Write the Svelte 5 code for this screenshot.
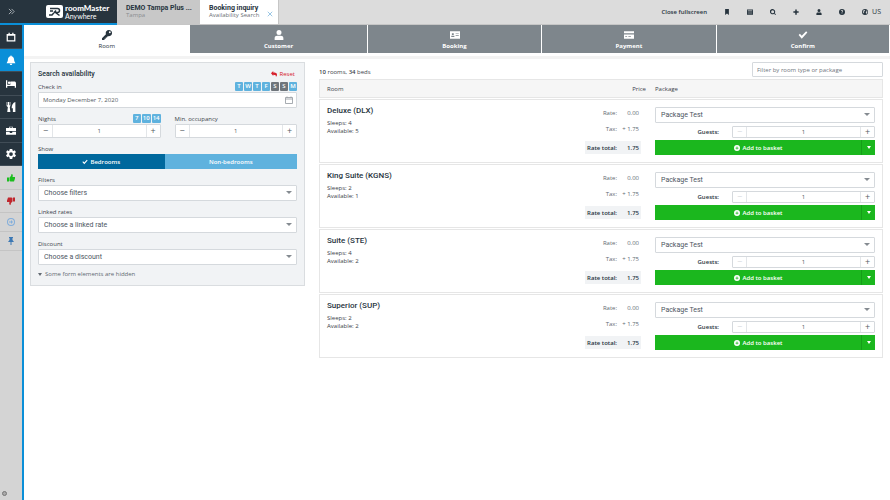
<script lang="ts">
	const paths: Record<string, string> = {
		chevrons: 'M2 2l6 6-6 6M8 2l6 6-6 6',
		calendar: 'M1 3h3V1h2v2h4V1h2v2h3v12H1zM3 6v7h10V6z',
		bell: 'M8 0l1 2c3 1 4 3 4 6 0 2 1 3 2 5H1c1-2 2-3 2-5 0-3 1-5 4-6zM6 14h4c0 3-4 3-4 0z',
		bed: 'M0 2h2v7h5V4h6c2 0 3 1 3 3v7h-2v-3H2v3H0zM3 6a2 2 0 104 0 2 2 0 10-4 0z',
		food: 'M1 0h1v5h1V0h2v5h1V0h1v6c0 1-1 2-1 2l1 8H2l1-8S1 7 1 6zM15 0v16h-4v-6H9C9 5 11 1 15 0z',
		briefcase: 'M5 3V1h6v2h5v5H0V3zM6 3h4V2H6zM0 9h6v2h4V9h6v5H0z',
		gear: 'M7 0h3l.5 2.5 1.500.7L14 2l2 3-2 1.500v2L16 10l-2 3-2-1-1.500 1L10 16H6l-.5-3L4 12l-2 1-2-3 2-1.500v-2L0 5l2-3 2 1.200 1.500-.7L6 0zM8 5a3 3 0 100 6 3 3 0 000-6z',
		thumb: 'M0 7h4v8H0zM5 7l3-3 1-4c3 0 3 3 2 6h5v3l-2 6H7l-2-1z',
		arrow: 'M8 0a8 8 0 100 16A8 8 0 008 0zm0 2a6 6 0 110 12A6 6 0 018 2zM8 4l4 4-4 4v-3H4V7h4z',
		pin: 'M4 0h8v2h-1v4l3 4H9v6H7v-6H2l3-4V2H4z',
		key: 'M11 0a5 5 0 00-4.700 6.700L0 13v3h4v-2h2v-2h2l1.300-2.300A5 5 0 1011 0zm1.500 2a1.500 1.500 0 110 3 1.500 1.500 0 010-3z',
		user: 'M8 0a4 4 0 100 8 4 4 0 000-8zM1 16v-3c0-3 2-4 4-4h6c2 0 4 1 4 4v3z',
		idcard: 'M0 2h16v12H0zM2 9v2h5V9zM3 5v3h3V5zM9 5v1h5V5zM9 8v1h5V8z',
		card: 'M0 2h16v3H0zM0 7h16v7H0zM2 10v1h3v-1zM7 10v1h4v-1z',
		check: 'M1 8l2-2 3 3 7-7 2 2-9 10z',
		bookmark: 'M3 0h10v16l-5-4-5 4z',
		list: 'M0 1h16v14H0zM2 4v1h12V4zM2 7v1h12V7zM2 10v1h12v-1z',
		search: 'M7 0a7 7 0 104 12.500l3 3.500 2-2-3.500-3A7 7 0 007 0zm0 3a4 4 0 110 8 4 4 0 010-8z',
		plus: 'M6 1h4v5h5v4h-5v5H6v-5H1V6h5z',
		help: 'M8 0a8 8 0 100 16A8 8 0 008 0zM5 5c0-3 6-3 6 0 0 2-2 2-2 4H7c0-3 2-2 2-4 0-1-2-1-2 0zm2 5h2v2H7z',
		globe: 'M8 0a8 8 0 100 16A8 8 0 008 0zM5 2l3 1-1 3-3 1 2 2-1 3-3-4zM10 3l4 3v4l-3 3-1-4 2-2z',
		reply: 'M0 6l6-6v4c6 0 10 1 10 6 0 2-1 4-3 6 1-4-1-6-7-6v3z',
		plusCircle: 'M8 0a8 8 0 100 16A8 8 0 008 0zM7 4h2v3h3v2H9v3H7V9H4V7h3z'
	};

	const nav = [
		{ icon: 'calendar', label: 'Calendar' },
		{ icon: 'bell', label: 'Booking inquiry', active: true },
		{ icon: 'bed', label: 'Rooms' },
		{ icon: 'food', label: 'Restaurant' },
		{ icon: 'briefcase', label: 'Business' },
		{ icon: 'gear', label: 'Settings' }
	];
	const shortcuts = [
		{ icon: 'thumb', label: 'Check in', kind: 'up' },
		{ icon: 'thumb', label: 'Check out', kind: 'down' },
		{ icon: 'arrow', label: 'Next', kind: 'next small' },
		{ icon: 'pin', label: 'Pin', kind: 'pin small' }
	];
	const tools = ['bookmark', 'list', 'search', 'plus', 'user', 'help'];
	const steps = [
		{ icon: 'key', label: 'Room' },
		{ icon: 'user', label: 'Customer' },
		{ icon: 'idcard', label: 'Booking' },
		{ icon: 'card', label: 'Payment' },
		{ icon: 'check', label: 'Confirm' }
	];
	const days = ['T', 'W', 'T', 'F', 'S', 'S', 'M'];
	const selects = [
		{ id: 'filters', label: 'Filters', value: 'Choose filters' },
		{ id: 'linked', label: 'Linked rates', value: 'Choose a linked rate' },
		{ id: 'discount', label: 'Discount', value: 'Choose a discount' }
	];
	const rooms = [
		{ name: 'Deluxe (DLX)', sleeps: 4, available: 5 },
		{ name: 'King Suite (KGNS)', sleeps: 2, available: 1 },
		{ name: 'Suite (STE)', sleeps: 4, available: 2 },
		{ name: 'Superior (SUP)', sleeps: 2, available: 2 }
	];
</script>

{#snippet icon(name: string)}
	<svg class="icon" viewBox="0 0 16 16" aria-hidden="true">
		<path class:line={name === 'chevrons'} d={paths[name]} fill-rule="evenodd" />
	</svg>
{/snippet}

{#snippet stepper(id: string)}
	<div class="stepper">
		<button type="button" aria-label="Decrease">−</button>
		<input {id} type="text" value="1" />
		<button type="button" aria-label="Increase">+</button>
	</div>
{/snippet}

<div class="app">
	<header>
		<div class="brand">
			<button type="button" class="expand" aria-label="Expand menu">{@render icon('chevrons')}</button>
			<svg class="logo" viewBox="0 0 34 26" aria-hidden="true">
				<rect width="34" height="26" rx="4" fill="#fff" />
				<path d="M8 7h15q4 0 4 4t-4 4h-4l8 6M6 20h6l8-9M8 12h6" fill="none" stroke="#27343e" stroke-width="3" />
			</svg>
			<div class="brand-name"><strong>roomMaster</strong><span>Anywhere</span></div>
		</div>
		<a class="tab" href="#tampa"><strong>DEMO Tampa Plus ...</strong><span>Tampa</span></a>
		<div class="tab current">
			<a href="#inquiry"><strong>Booking inquiry</strong><span>Availability Search</span></a>
			<button type="button" aria-label="Close tab">
				<svg viewBox="0 0 8 8"><path d="M1 1l6 6M7 1L1 7" stroke="#79b4dc" /></svg>
			</button>
		</div>
		<div class="tools">
			<button type="button">Close fullscreen</button>
			{#each tools as tool}
				<button type="button" aria-label={tool}>{@render icon(tool)}</button>
			{/each}
			<button type="button" class="locale">{@render icon('globe')} US</button>
		</div>
	</header>

	<div class="body">
		<nav>
			{#each nav as item}
				<a href="#{item.icon}" class:active={item.active} aria-label={item.label}>{@render icon(item.icon)}</a>
			{/each}
			{#each shortcuts as item}
				<a href="#{item.kind}" class="light {item.kind}" aria-label={item.label}>{@render icon(item.icon)}</a>
			{/each}
			<button type="button" class="status" aria-label="Status"></button>
		</nav>

		<main>
			<div class="steps">
				{#each steps as step, i}
					<button type="button" class:selected={i === 0}>{@render icon(step.icon)}<span>{step.label}</span></button>
				{/each}
			</div>

			<div class="content">
				<form>
					<div class="row title">
						<h1>Search availability</h1>
						<button type="button" class="reset">{@render icon('reply')} Reset</button>
					</div>
					<div class="row label-row">
						<label for="checkin">Check in</label>
						<div class="chips">
							{#each days as day}
								<button type="button" class:weekend={day === 'S'}>{day}</button>
							{/each}
						</div>
					</div>
					<div class="field date">
						<input id="checkin" type="text" value="Monday December 7, 2020" />
						<svg viewBox="0 0 16 16" aria-hidden="true"><path d="M1 3h14v12H1zM1 6h14M4 1v2M12 1v2" fill="none" stroke="#8b9198" stroke-width="1.500" /></svg>
					</div>
					<div class="pair">
						<div>
							<div class="row label-row">
								<label for="nights">Nights</label>
								<div class="chips">
									{#each [7, 10, 14] as n}
										<button type="button">{n}</button>
									{/each}
								</div>
							</div>
							{@render stepper('nights')}
						</div>
						<div>
							<div class="row label-row"><label for="occupancy">Min. occupancy</label></div>
							{@render stepper('occupancy')}
						</div>
					</div>
					<div class="group">
						<div class="row label-row"><span>Show</span></div>
						<div class="toggle">
							<button type="button" class="on">{@render icon('check')} Bedrooms</button>
							<button type="button">Non-bedrooms</button>
						</div>
					</div>
					{#each selects as s}
						<div class="group">
							<div class="row label-row"><label for={s.id}>{s.label}</label></div>
							<div class="select"><select id={s.id}><option>{s.value}</option></select></div>
						</div>
					{/each}
					<button type="button" class="hidden-note"><i class="caret"></i>Some form elements are hidden</button>
				</form>

				<section>
					<div class="summary">
						<span><b>10</b> rooms, <b>34</b> beds</span>
						<input type="text" aria-label="Filter" placeholder="Filter by room type or package" />
					</div>
					<div class="columns head">
						<span>Room</span><span class="price-head">Price</span><span>Package</span>
					</div>
					{#each rooms as room, i}
						<article class="columns">
							<div class="room">
								<h2>{room.name}</h2>
								<p>Sleeps: {room.sleeps}</p>
								<p>Available: {room.available}</p>
							</div>
							<dl>
								<div><dt>Rate:</dt><dd>0.00</dd></div>
								<div><dt>Tax:</dt><dd>+ 1.75</dd></div>
								<div class="total"><dt>Rate total:</dt><dd>1.75</dd></div>
							</dl>
							<div class="package">
								<div class="select"><select aria-label="Package"><option>Package Test</option></select></div>
								<div class="guests">
									<label for="guests-{i}">Guests:</label>
									{@render stepper(`guests-${i}`)}
								</div>
								<div class="basket">
									<button type="button">{@render icon('plusCircle')} Add to basket</button>
									<button type="button" class="more" aria-label="More options"><i class="caret"></i></button>
								</div>
							</div>
						</article>
					{/each}
				</section>
			</div>
		</main>
	</div>
</div>

<style>
	:global(body) {
		margin: 0;
	}

	.app {
		display: flex;
		flex-direction: column;
		min-height: 100vh;
		background: #fff;
		color: #3c434a;
		font: 6px/8px 'Open Sans', 'Noto Sans', sans-serif;
	}

	.app * {
		box-sizing: border-box;
	}

	button,
	input,
	select {
		margin: 0;
		padding: 0;
		border: 0;
		background: none;
		color: inherit;
		font: inherit;
	}

	a {
		color: inherit;
		text-decoration: none;
	}

	h1,
	h2,
	p,
	dl,
	dd {
		margin: 0;
	}

	input {
		min-width: 0;
	}

	.icon {
		width: 6px;
		height: 6px;
		flex: none;
		fill: currentColor;
	}

	.icon .line {
		fill: none;
		stroke: currentColor;
		stroke-width: 2;
	}

	header {
		display: flex;
		height: 25px;
		background: #dcdcdc;
		border-bottom: 1px solid #c6c6c6;
	}

	.brand {
		display: flex;
		align-items: center;
		width: 117px;
		height: 25px;
		background: #27343e;
		border-bottom: 2px solid #0a8fd8;
		color: #fff;
	}

	.expand {
		display: flex;
		justify-content: center;
		width: 22px;
		margin-right: 24px;
		color: #b5bbc0;
	}

	.expand .icon {
		width: 7px;
		height: 7px;
	}

	.logo {
		width: 17px;
		height: 13px;
		margin-right: 2px;
	}

	.brand-name {
		display: flex;
		flex-direction: column;
		font-family: Lato, sans-serif;
		font-size: 8px;
	}

	.brand-name strong {
		font-weight: 900;
	}

	.brand-name span {
		font-size: 7px;
	}

	.tab {
		width: 83px;
		padding: 4px 9px 0;
		background: #c8c8c8;
	}

	.tab strong,
	.tab span {
		display: block;
		white-space: nowrap;
	}

	.tab strong {
		color: #27343e;
		font-family: Roboto, sans-serif;
		font-size: 7px;
		font-weight: 700;
	}

	.tab span {
		line-height: 7px;
		color: #8a8d90;
	}

	.tab.current {
		display: flex;
		justify-content: space-between;
		width: 79px;
		padding-right: 5px;
		background: #fff;
		border-right: 1px solid #c6c6c6;
	}

	.tab.current span {
		color: #6b7075;
	}

	.tab button svg {
		display: block;
		width: 6px;
		height: 6px;
	}

	.tools {
		display: flex;
		flex: 1;
		align-items: center;
		justify-content: flex-end;
		gap: 17px;
		padding-right: 9px;
		color: #27343e;
		font-weight: 600;
	}

	.tools button {
		display: flex;
		align-items: center;
		gap: 4px;
	}

	.tools .locale {
		font-size: 7px;
		font-weight: 400;
	}

	.body {
		display: flex;
		flex: 1;
	}

	nav {
		display: flex;
		flex-direction: column;
		width: 24px;
		background: #d4d4d4;
		border-right: 2px solid #0a8fd8;
	}

	nav a {
		display: flex;
		align-items: center;
		justify-content: center;
		height: 24px;
		background: #27343e;
		border-bottom: 1px solid #414d57;
		color: #fff;
	}

	nav a:nth-child(even) {
		height: 23px;
	}

	nav a .icon,
	.steps .icon {
		width: 10px;
		height: 10px;
	}

	nav a.active {
		background: #0a8fd8;
	}

	nav a.light {
		background: #d4d4d4;
		border-color: #c4c4c4;
	}

	nav a.light .icon {
		width: 8px;
		height: 8px;
	}

	nav a.up {
		color: #1bbd1e;
	}

	nav a.down {
		color: #c0272d;
	}

	nav a.down .icon {
		transform: rotate(180deg);
	}

	nav a.light.small {
		height: 19px;
	}

	nav a.next {
		color: #82aedb;
	}

	nav a.pin {
		color: #3c78b4;
	}

	.status {
		width: 5px;
		height: 5px;
		margin: auto 0 4px 2px;
		border: 1px solid #777;
		border-radius: 50%;
		background: #aaa;
	}

	main {
		flex: 1;
		min-width: 0;
	}

	.steps {
		display: grid;
		grid-template-columns: 166fr 177fr 174fr 174fr 173fr;
		gap: 1px;
		padding: 0 1px 3px 0;
		border-bottom: 3px solid #f3f3f3;
	}

	.steps button {
		display: flex;
		flex-direction: column;
		align-items: center;
		height: 28px;
		padding-top: 5px;
		background: #7e868c;
		color: #fff;
		font-weight: 700;
	}

	.steps span {
		margin-top: 2px;
	}

	.steps .selected {
		background: #fff;
		color: #27343e;
		font-weight: 400;
	}

	.content {
		display: flex;
		align-items: flex-start;
		gap: 14px;
		padding: 3px 7px 0 6px;
	}

	form {
		width: 275px;
		padding: 6px 7px 7px;
		background: #f1f3f5;
		border: 1px solid #dadde0;
	}

	.row {
		display: flex;
		align-items: center;
		justify-content: space-between;
	}

	.title {
		height: 9px;
	}

	h1 {
		color: #27343e;
		font-family: Roboto, sans-serif;
		font-size: 7px;
		font-weight: 500;
	}

	.reset {
		display: flex;
		align-items: center;
		gap: 3px;
		padding-right: 2px;
		color: #d6202c;
	}

	.label-row {
		height: 11px;
		margin-top: 3px;
	}

	.chips {
		display: flex;
		gap: 1px;
	}

	.chips button {
		min-width: 8px;
		height: 9px;
		padding: 0 1px;
		border-radius: 1px;
		background: #5fb2de;
		color: #fff;
		font-weight: 600;
		line-height: 9px;
	}

	.chips .weekend {
		background: #6f757b;
	}

	.field,
	.stepper,
	.select select,
	.summary input {
		background: #fff;
		border: 1px solid #d5d9dd;
		border-radius: 1px;
	}

	.date {
		display: flex;
		align-items: center;
		height: 16px;
		padding: 0 3px 0 4px;
		color: #555c63;
	}

	.date input {
		flex: 1;
	}

	.date svg {
		width: 8px;
		height: 8px;
	}

	.pair {
		display: grid;
		grid-template-columns: 1fr 1fr;
		gap: 14px;
		margin-top: 3px;
	}

	.pair .label-row {
		margin-top: 2px;
	}

	.stepper {
		display: flex;
		height: 14px;
		color: #555c63;
	}

	.stepper button {
		width: 13px;
		font-size: 9px;
	}

	.stepper input {
		flex: 1;
		border: solid #e3e6e9;
		border-width: 0 1px;
		text-align: center;
	}

	.group {
		margin-top: 5px;
	}

	.group .label-row {
		margin: 0;
	}

	.toggle {
		display: flex;
		height: 15px;
	}

	.toggle button {
		display: flex;
		flex: 1 1 auto;
		align-items: center;
		justify-content: center;
		gap: 2px;
		background: #5fb2de;
		color: #fff;
		font-weight: 600;
	}

	.toggle .on {
		background: #00689d;
	}

	.select {
		position: relative;
	}

	.select::after {
		content: '';
		position: absolute;
		top: 6px;
		right: 5px;
		border: solid transparent;
		border-width: 3px 3px 0;
		border-top-color: #858b91;
		pointer-events: none;
	}

	.select select {
		display: block;
		width: 100%;
		height: 16px;
		padding: 0 5px;
		appearance: none;
		color: #4c5661;
		font-family: Roboto, sans-serif;
		font-size: 7px;
	}

	.caret {
		border: solid transparent;
		border-width: 3px 2px 0;
		border-top-color: currentColor;
	}

	.hidden-note {
		display: flex;
		align-items: center;
		gap: 3px;
		margin-top: 5px;
		color: #626a72;
	}

	section {
		flex: 1;
		min-width: 0;
	}

	.summary {
		display: flex;
		align-items: center;
		justify-content: space-between;
		height: 15px;
		margin-bottom: 2px;
	}

	.summary span {
		padding-top: 4px;
	}

	.summary b {
		font-weight: 600;
	}

	.summary input {
		width: 131px;
		height: 15px;
		padding: 0 4px;
	}

	.summary input::placeholder {
		color: #6f767d;
		opacity: 1;
	}

	.columns {
		display: grid;
		grid-template-columns: 1fr 67px 220px;
		gap: 0 3px;
		padding: 0 7px;
		border: 1px solid #e6e6e6;
	}

	.head {
		align-items: center;
		height: 19px;
		background: #f6f6f6;
	}

	.price-head {
		padding-right: 6px;
		text-align: right;
	}

	article {
		height: 64px;
		margin-top: 1px;
	}

	.room {
		padding-top: 6px;
	}

	h2 {
		margin-bottom: 4px;
		color: #27343e;
		font-family: Roboto, sans-serif;
		font-size: 8px;
		font-weight: 500;
		line-height: 9px;
	}

	dl {
		display: flex;
		flex-direction: column;
		gap: 3px;
		padding: 6px 11px 0 0;
		color: #626a72;
		white-space: nowrap;
	}

	dl div {
		display: flex;
		align-items: center;
		justify-content: flex-end;
		height: 13px;
		padding-right: 2px;
	}

	dd {
		width: 22px;
		text-align: right;
	}

	dl .total {
		margin-top: 3px;
		background: #f1f3f5;
		color: #27343e;
		font-weight: 600;
	}

	.package {
		padding-top: 7px;
	}

	.guests {
		display: flex;
		align-items: center;
		gap: 13px;
		margin: 3px 0 2px;
	}

	.guests label {
		width: 64px;
		color: #27343e;
		font-weight: 600;
		text-align: right;
	}

	.guests .stepper {
		flex: 1;
		height: 12px;
		line-height: 10px;
	}

	.guests .stepper button:first-child {
		color: #d5d9dd;
	}

	.basket {
		display: flex;
		height: 15px;
		background: #1bb71e;
		color: #fff;
		font-weight: 600;
	}

	.basket button {
		display: flex;
		flex: 1;
		align-items: center;
		justify-content: center;
		gap: 3px;
	}

	.basket .more {
		flex: 0 0 14px;
		border-left: 1px solid #169e19;
	}
</style>
